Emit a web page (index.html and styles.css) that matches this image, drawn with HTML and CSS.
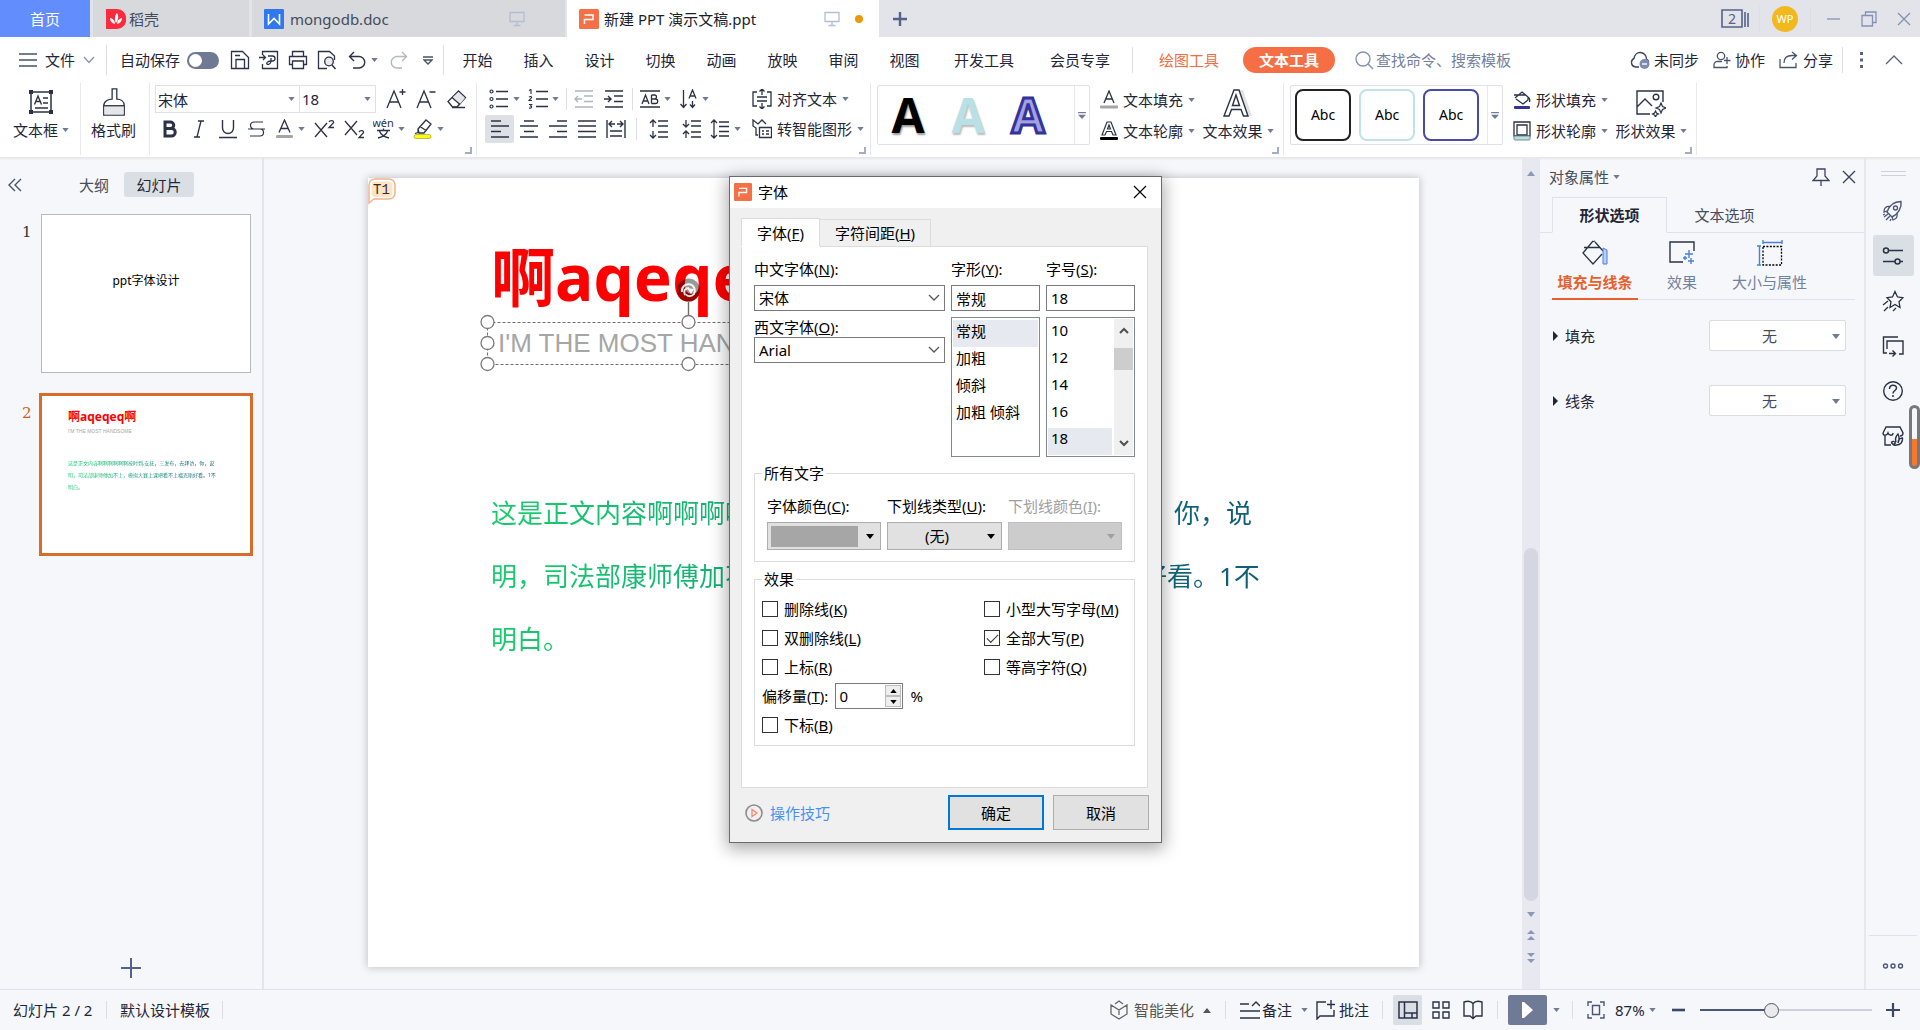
FILE: index.html
```html
<!DOCTYPE html>
<html lang="zh-CN">
<head>
<meta charset="utf-8">
<title>新建 PPT 演示文稿.ppt</title>
<link rel="stylesheet" href="styles.css">
</head>
<body>
<svg class="sprite" aria-hidden="true">
  <symbol id="caret" viewBox="0 0 8 5"><path d="M0 0h8L4 5z" fill="#6f7a99"/></symbol>
  <symbol id="caret-k" viewBox="0 0 8 5"><path d="M0 0h8L4 5z" fill="#000"/></symbol>
  <symbol id="more" viewBox="0 0 9 8"><path d="M0 .7h9" stroke="#6f7a99" stroke-width="1.4"/><path d="M0 3h9L4.500 8z" fill="#6f7a99"/></symbol>
  <symbol id="launch" viewBox="0 0 7 7"><path d="M6 0v6H0" fill="none" stroke="#a4adc4" stroke-width="2"/></symbol>
  <symbol id="screen" viewBox="0 0 16 16"><path d="M1 1.500h14v9H1zM8 10.500V14M4.500 14.500h7" fill="none" stroke="#b3bdd4" stroke-width="1.300"/></symbol>
  <symbol id="chev" viewBox="0 0 12 8"><path d="M1 1l5 5 5-5" fill="none" stroke="#555" stroke-width="1.300"/></symbol>
  <symbol id="plogo" viewBox="0 0 20 20"><rect width="20" height="20" rx="1.500" fill="#f47046"/><path d="M5.500 15v-4.500h8.500V6H5.500" fill="none" stroke="#fff" stroke-width="1.500"/></symbol>
</svg>

<header class="titlebar">
  <button class="tab tab-home">首页</button>
  <button class="tab tab-docer">
    <svg width="20" height="20" viewBox="0 0 20 20"><path d="M0 0h11a9 9 0 0 1 9 10 9 9 0 0 1-9 10H0z" fill="#fb2a3d"/><path d="M10 14c-2-4-1-8 1-10 2 3 1.500 7-1 10zM9 15c-3-.5-5-3-5-6 3 .5 5 3 5 6zM11 15c0-3 2-5.500 5-6 0 3-2 5.500-5 6z" fill="#fff"/></svg>
    <span>稻壳</span>
  </button>
  <button class="tab tab-doc">
    <svg width="20" height="20" viewBox="0 0 20 20"><rect width="20" height="20" rx="1" fill="#3078f0"/><path d="M4.500 5v10L10 9.500l5.500 5.500V5" fill="none" stroke="#fff" stroke-width="1.600"/></svg>
    <span class="tab-name">mongodb.doc</span>
    <svg width="16" height="16"><use href="#screen"/></svg>
  </button>
  <button class="tab tab-active">
    <svg width="20" height="20"><use href="#plogo"/></svg>
    <span class="tab-name">新建 PPT 演示文稿.ppt</span>
    <svg width="16" height="16"><use href="#screen"/></svg>
    <i class="dot"></i>
  </button>
  <button class="newtab" aria-label="新建"><svg width="16" height="16" viewBox="0 0 16 16"><path d="M8 1v14M1 8h14" stroke="#56628a" stroke-width="2.400"/></svg></button>
  <div class="win">
    <svg width="28" height="19" viewBox="0 0 28 19"><path d="M1 1h20v17H1zM24 3v15M27 4v14" fill="none" stroke="#56628a" stroke-width="1.600"/><text x="11" y="15" text-anchor="middle" font-size="14" fill="#56628a">2</text></svg>
    <i class="vsep"></i>
    <span class="avatar">WP</span>
    <i class="vsep"></i>
    <button aria-label="最小化"><svg width="14" height="14" viewBox="0 0 14 14"><path d="M0 7h13" stroke="#8491b3" stroke-width="1.300"/></svg></button>
    <button aria-label="还原"><svg width="16" height="16" viewBox="0 0 16 16"><path d="M1 4.500h10.500v10.500H1zM4.500 4.500V1H15v10.500h-3.500" fill="none" stroke="#8491b3" stroke-width="1.300"/></svg></button>
    <button aria-label="关闭"><svg width="14" height="14" viewBox="0 0 14 14"><path d="M1 1l12 12M13 1L1 13" stroke="#8491b3" stroke-width="1.300"/></svg></button>
  </div>
</header>

<nav class="menubar">
  <div class="filebox">
    <svg width="18" height="14" viewBox="0 0 18 14"><path d="M0 1h18M0 7h18M0 13h18" stroke="#4a5468" stroke-width="1.400"/></svg>
    <button class="file">文件</button>
    <svg width="12" height="8" viewBox="0 0 12 8"><path d="M1 1l5 5.500L11 1" fill="none" stroke="#8a93a8" stroke-width="1.300"/></svg>
  </div>
  <div class="quick">
    <label for="autosave">自动保存</label><input id="autosave" class="toggle" type="checkbox">
    <button aria-label="保存"><svg width="20" height="20" viewBox="0 0 20 20"><path d="M1.500 1.500h11l6 6v11h-17zM6 18.500V9.500h8.500v9M5 5.500h5" fill="none" stroke="#2b3245" stroke-width="1.300"/></svg></button>
    <button aria-label="输出PDF"><svg width="20" height="20" viewBox="0 0 20 20"><path d="M3.500 5V1.500h15v17h-15V14M0 7.500h6M4 5l2.500 2.500L4 10" fill="none" stroke="#2b3245" stroke-width="1.300"/><path d="M9 6h4.500a2.500 2.500 0 0 1 0 5H12v-3M12 11c0 3-3 4-4 3s1-3 4-3" fill="none" stroke="#2b3245" stroke-width="1.300"/></svg></button>
    <button aria-label="打印"><svg width="20" height="20" viewBox="0 0 20 20"><path d="M4.500 6V1.500h11V6M4.500 14.500h-3V6.500h17v8h-3M4.500 11h11v7.500h-11z" fill="none" stroke="#2b3245" stroke-width="1.300"/></svg></button>
    <button aria-label="打印预览"><svg width="20" height="20" viewBox="0 0 20 20"><path d="M10 18.500H1.500v-17h11l5 4.500v4" fill="none" stroke="#2b3245" stroke-width="1.300"/><circle cx="12" cy="11.500" r="4.300" fill="#e9ebef" stroke="#2b3245" stroke-width="1.300"/><path d="M15 15l3.500 4" stroke="#2b3245" stroke-width="1.500"/></svg></button>
    <button class="withcaret" aria-label="撤销"><svg width="18" height="18" viewBox="0 0 18 18"><path d="M6 1L1.500 5.500 6 10M1.500 5.500H11a5.500 5.500 0 0 1 0 11.500H5" fill="none" stroke="#2b3245" stroke-width="1.400"/></svg><svg width="7" height="4"><use href="#caret"/></svg></button>
    <button aria-label="恢复"><svg width="18" height="18" viewBox="0 0 18 18"><path d="M12 1l4.500 4.500L12 10M16.500 5.500H7A5.500 5.500 0 0 0 7 17h5" fill="none" stroke="#b5b8bf" stroke-width="1.400"/></svg></button>
    <button aria-label="更多"><svg width="10" height="9" viewBox="0 0 10 9"><path d="M0 1h10M1 4l4 4 4-4z" fill="none" stroke="#4a5468" stroke-width="1.300"/></svg></button>
  </div>
  <div class="tabs">
    <button>开始</button><button>插入</button><button>设计</button><button>切换</button><button>动画</button><button>放映</button><button>审阅</button><button>视图</button><button class="wide">开发工具</button><button class="wide">会员专享</button>
    <i class="vsep"></i>
    <button class="orange">绘图工具</button><button class="pill">文本工具</button>
  </div>
  <label class="search"><svg width="19" height="19" viewBox="0 0 19 19"><circle cx="8" cy="8" r="7" fill="none" stroke="#8491b3" stroke-width="1.400"/><path d="M13 13l5 5" stroke="#8491b3" stroke-width="1.400"/></svg><input type="text" placeholder="查找命令、搜索模板" aria-label="查找命令"></label>
  <div class="menuright">
    <button><svg width="20" height="18" viewBox="0 0 20 18"><path d="M9 16H5.500A4.500 4.500 0 0 1 4 7.500C4.500 4 7 1.500 10 1.500c4 0 6.500 3 6.500 6.500 1.500.8 2 1.500 2 3" fill="none" stroke="#3a4360" stroke-width="1.400"/><circle cx="14.500" cy="13" r="5" fill="#7f8bb0"/><path d="M12 13h5" stroke="#fff" stroke-width="1.400"/></svg>未同步</button>
    <button><svg width="18" height="18" viewBox="0 0 18 18"><circle cx="8" cy="5" r="3.700" fill="none" stroke="#4a5468" stroke-width="1.300"/><path d="M9 10.500H5a3.500 3.500 0 0 0-4 3.500v2.500h13V15M14 6v7M11 9.500h6.500" fill="none" stroke="#4a5468" stroke-width="1.300"/></svg>协作</button>
    <button><svg width="20" height="18" viewBox="0 0 20 18"><path d="M1 8v8.500h16V12M5 12c0-5 3-7.500 8-7.500h4M13 1l4.500 3.500L13 8.500" fill="none" stroke="#4a5468" stroke-width="1.300"/></svg>分享</button>
    <i class="vsep"></i>
    <button class="sq" aria-label="更多"><svg width="4" height="16" viewBox="0 0 4 16"><path d="M0 0h3v3H0zM0 6.500h3v3H0zM0 13h3v3H0z" fill="#5b6478"/></svg></button>
    <button class="sq" aria-label="折叠功能区"><svg width="18" height="10" viewBox="0 0 18 10"><path d="M1 9l8-8 8 8" fill="none" stroke="#5b6478" stroke-width="1.300"/></svg></button>
  </div>
</nav>

<section class="ribbon">
  <div class="group g-box">
    <button class="big"><svg width="28" height="28" viewBox="0 0 28 28"><path d="M4 4h20v20H4z" fill="none" stroke="#2b3245" stroke-width="1.500"/><path d="M2 2h4v4H2zM22 2h4v4h-4zM2 22h4v4H2zM22 22h4v4h-4z" fill="#2b3245"/><path d="M7.500 16.500L11 8l3.500 8.500M9 13.500h4.500M16 10h5M16 15h5M8 20h13" fill="none" stroke="#2b3245" stroke-width="1.400"/></svg><span>文本框<svg class="c" width="7" height="4"><use href="#caret"/></svg></span></button>
  </div>
  <div class="group g-brush">
    <button class="big"><svg width="26" height="30" viewBox="0 0 26 30"><path d="M11 1h5v11c4 0 8 2 8 7v10H2V19c0-5 5-7 9-7z" fill="#fff" stroke="#2b3245" stroke-width="1.400"/><path d="M2.700 19h20.600v9.300H2.700z" fill="#e4e6ea"/><path d="M2 19h22" stroke="#2b3245" stroke-width="1.400"/></svg><span>格式刷</span></button>
  </div>
  <div class="group g-font">
    <div class="row font1">
      <div class="combo"><input type="text" value="宋体" aria-label="字体"><svg width="7" height="4"><use href="#caret"/></svg></div>
      <div class="combo last"><input type="text" value="18" aria-label="字号"><svg width="7" height="4"><use href="#caret"/></svg></div>
      <button aria-label="增大字号"><svg width="20" height="22" viewBox="0 0 20 22"><path d="M1 20L8 3l7 17M3.500 14h9M16.500 1v6M13.500 4h6" fill="none" stroke="#2b3245" stroke-width="1.300"/></svg></button>
      <button aria-label="减小字号"><svg width="20" height="22" viewBox="0 0 20 22"><path d="M1 20L8 3l7 17M3.500 14h9M13.500 4h6" fill="none" stroke="#2b3245" stroke-width="1.300"/></svg></button>
      <button aria-label="清除格式"><svg width="20" height="20" viewBox="0 0 20 20"><path d="M5.500 18L1 12.500 11.500 2l7 6.500L10 18z" fill="#fff" stroke="#2b3245" stroke-width="1.300"/><path d="M6 8l7 7 5-6-6.500-6z" fill="#e4e6ea"/><path d="M5 8.500l8 7M5 18.500h13" stroke="#2b3245" stroke-width="1.300"/></svg></button>
    </div>
    <div class="row font2">
      <button aria-label="加粗"><svg width="16" height="18" viewBox="0 0 16 18"><path d="M3 2h5.500a3.200 3.200 0 0 1 0 6.500H3zM3 8.500h6.500a3.700 3.700 0 0 1 0 7.500H3z" fill="none" stroke="#2b3245" stroke-width="3"/></svg></button>
      <button aria-label="倾斜"><svg width="12" height="18" viewBox="0 0 12 18"><path d="M5 1h6M1 17h6M8 1L4 17" fill="none" stroke="#2b3245" stroke-width="1.300"/></svg></button>
      <button aria-label="下划线"><svg width="18" height="20" viewBox="0 0 18 20"><path d="M3.500 1v8a5.500 5.500 0 0 0 11 0V1M0 18.500h18" fill="none" stroke="#2b3245" stroke-width="1.400"/></svg></button>
      <button aria-label="删除线"><svg width="18" height="18" viewBox="0 0 18 18"><path d="M15 2H6a3.500 3.500 0 0 0 0 7h6a3.500 3.500 0 0 1 0 7H2M0 9h17" fill="none" stroke="#2b3245" stroke-width="1.200"/></svg></button>
      <button class="withcaret" aria-label="字体颜色"><svg width="18" height="20" viewBox="0 0 18 20"><path d="M3 13.500L8.500 1 14 13.500M5 9.500h7" fill="none" stroke="#2b3245" stroke-width="1.300"/><rect x="0" y="16" width="17" height="3" rx="1" fill="#a6a6a6"/></svg><svg width="7" height="4"><use href="#caret"/></svg></button>
      <button aria-label="上标"><svg width="21" height="20" viewBox="0 0 21 20"><path d="M1 4l12 14M13 4L1 18M15 3c1-2 5-2 4.500.7L15 8.500h5" fill="none" stroke="#2b3245" stroke-width="1.300"/></svg></button>
      <button aria-label="下标"><svg width="21" height="20" viewBox="0 0 21 20"><path d="M1 2l12 14M13 2L1 16M15 13c1-2 5-2 4.500.7L15 18.500h5" fill="none" stroke="#2b3245" stroke-width="1.300"/></svg></button>
      <button class="withcaret" aria-label="拼音指南"><svg width="21" height="20" viewBox="0 0 21 20"><text x="10" y="8" font-size="11" text-anchor="middle" fill="#2b3245">wén</text><path d="M4 11.500h13M10.500 9.500v2M6.500 12c1 3 5 6 9.500 7M14.500 12c-1 3-5 6-9.500 7" fill="none" stroke="#2b3245" stroke-width="1.300"/></svg><svg width="7" height="4"><use href="#caret"/></svg></button>
      <button class="withcaret" aria-label="突出显示"><svg width="20" height="20" viewBox="0 0 20 20"><path d="M5 10l8-9 5 4-7 9H6zM5 10v3.500l-3 1M7 7.500l6 4" fill="none" stroke="#2b3245" stroke-width="1.300"/><rect x="1" y="15.500" width="17" height="4" rx="2" fill="#ff0" stroke="#8b8b3a" stroke-width=".6"/></svg><svg width="7" height="4"><use href="#caret"/></svg></button>
    </div>
    <svg class="launcher" width="7" height="7"><use href="#launch"/></svg>
  </div>
  <div class="group g-para">
    <div class="row para1">
      <button class="withcaret" aria-label="项目符号"><svg width="20" height="20" viewBox="0 0 20 20"><path d="M7 2.500h12M7 10h12M7 17.500h12" stroke="#2b3245" stroke-width="1.500"/><g fill="none" stroke="#2b3245" stroke-width="1.200"><circle cx="2.500" cy="2.500" r="1.500"/><circle cx="2.500" cy="10" r="1.500"/><circle cx="2.500" cy="17.500" r="1.500"/></g></svg><svg width="7" height="4"><use href="#caret"/></svg></button>
      <button class="withcaret" aria-label="编号"><svg width="20" height="20" viewBox="0 0 20 20"><path d="M8 2.500h12M8 10h12M8 17.500h12" stroke="#2b3245" stroke-width="1.500"/><path d="M1 1.500L3 .5V5M1 8c1-1 3-.5 2.500.7L1 11.500h3M1 15.500h2.700L2.500 17c2 0 1.500 2.500-1.500 2" fill="none" stroke="#2b3245" stroke-width="1.100"/></svg><svg width="7" height="4"><use href="#caret"/></svg></button>
      <i class="rsep"></i>
      <button aria-label="减少缩进"><svg width="20" height="18" viewBox="0 0 20 18"><path d="M1 1h18M10 6h9M10 11.500h9M1 17h18M8 9H1M4 6L1 9l3 3" fill="none" stroke="#b2b5bc" stroke-width="1.400"/></svg></button>
      <button aria-label="增加缩进"><svg width="20" height="18" viewBox="0 0 20 18"><path d="M1 1h18M10 6h9M10 11.500h9M1 17h18M0 9h7M4 6l3 3-3 3" fill="none" stroke="#2b3245" stroke-width="1.400"/></svg></button>
      <i class="rsep"></i>
      <button class="withcaret" aria-label="字符缩放"><svg width="20" height="18" viewBox="0 0 20 18"><path d="M0 1h20M0 17h20M2 14l3.500-9L9 14M3.500 11h4M11.500 5v8.500M11.500 5h3a2 2 0 0 1 0 4h-3M11.500 9h4a2.200 2.200 0 0 1 0 4.500h-4" fill="none" stroke="#2b3245" stroke-width="1.300"/></svg><svg width="7" height="4"><use href="#caret"/></svg></button>
      <button class="withcaret" aria-label="文字方向"><svg width="18" height="20" viewBox="0 0 18 20"><path d="M3.500 1v17M.5 15l3 3.500 3-3.500M9 9.500L12.500 1 16 9.500M10 7h5M12.500 12v6M10 15.500l2.500 3 2.500-3" fill="none" stroke="#2b3245" stroke-width="1.300"/></svg><svg width="7" height="4"><use href="#caret"/></svg></button>
      <button class="lab"><svg width="20" height="20" viewBox="0 0 20 20"><path d="M5 3H1v14h4M15 3h4v14h-4M10 0v6M7.500 2.500L10 0l2.500 2.500M10 14v6M7.500 17.500L10 20l2.500-2.500M5 8h10M5 12h10" fill="none" stroke="#2b3245" stroke-width="1.300"/></svg>对齐文本<svg class="c" width="7" height="4"><use href="#caret"/></svg></button>
    </div>
    <div class="row para2">
      <button class="on" aria-label="左对齐"><svg width="18" height="18" viewBox="0 0 18 18"><path d="M0 1h10M0 6h18M0 11.500h10M0 17h18" stroke="#2b3245" stroke-width="1.400"/></svg></button>
      <button aria-label="居中"><svg width="18" height="18" viewBox="0 0 18 18"><path d="M4 1h10M0 6h18M4 11.500h10M0 17h18" stroke="#2b3245" stroke-width="1.400"/></svg></button>
      <button aria-label="右对齐"><svg width="18" height="18" viewBox="0 0 18 18"><path d="M8 1h10M0 6h18M8 11.500h10M0 17h18" stroke="#2b3245" stroke-width="1.400"/></svg></button>
      <button aria-label="两端对齐"><svg width="18" height="18" viewBox="0 0 18 18"><path d="M0 1h18M0 6h18M0 11.500h18M0 17h18" stroke="#2b3245" stroke-width="1.400"/></svg></button>
      <button aria-label="分散对齐"><svg width="20" height="18" viewBox="0 0 20 18"><path d="M1 0v18M19 0v18M3 4h6M11 4h6M6 1L3 4l3 3M14 1l3 3-3 3M4 11h12M4 16h12" fill="none" stroke="#2b3245" stroke-width="1.400"/></svg></button>
      <i class="rsep"></i>
      <button aria-label="增大段距"><svg width="20" height="20" viewBox="0 0 20 20"><path d="M9 2h10M9 7h10M9 13h10M9 18h10M4 8V1M1 4l3-3 3 3M4 12v7M1 16l3 3 3-3" fill="none" stroke="#2b3245" stroke-width="1.300"/></svg></button>
      <button aria-label="减小段距"><svg width="20" height="20" viewBox="0 0 20 20"><path d="M9 2h10M9 7h10M9 13h10M9 18h10M4 1v7M1 5l3 3 3-3M4 19v-7M1 15l3-3 3 3" fill="none" stroke="#2b3245" stroke-width="1.300"/></svg></button>
      <button class="withcaret" aria-label="行距"><svg width="20" height="20" viewBox="0 0 20 20"><path d="M9 3h10M9 7.500h10M9 12.500h10M9 17h10M4 1v18M1 4l3-3 3 3M1 16l3 3 3-3" fill="none" stroke="#2b3245" stroke-width="1.300"/></svg><svg width="7" height="4"><use href="#caret"/></svg></button>
      <button class="lab"><svg width="20" height="20" viewBox="0 0 20 20"><path d="M6 16H4V9L1 7V1l5 4 4-4 4 4" fill="none" stroke="#2b3245" stroke-width="1.300"/><path d="M7.500 8.500h12v10h-12zM10 12h2M14 12h3M10 15h2M14 15h3" fill="none" stroke="#2b3245" stroke-width="1.300"/></svg>转智能图形<svg class="c" width="7" height="4"><use href="#caret"/></svg></button>
    </div>
    <svg class="launcher" width="7" height="7"><use href="#launch"/></svg>
  </div>
  <div class="group g-text">
    <div class="gallery">
      <button class="wa wa-black">A</button><button class="wa wa-mint">A</button><button class="wa wa-blue">A</button>
      <button class="gmore" aria-label="更多样式"><svg width="8" height="7"><use href="#more"/></svg></button>
    </div>
    <div class="stack">
      <button class="lab"><svg width="18" height="20" viewBox="0 0 18 20"><path d="M4 13L9 1l5 12M6 9h6" fill="none" stroke="#2b3245" stroke-width="1.300"/><rect x="0" y="15.500" width="18" height="3" rx="1" fill="#a6a6a6"/></svg>文本填充<svg class="c" width="7" height="4"><use href="#caret"/></svg></button>
      <button class="lab"><svg width="18" height="20" viewBox="0 0 18 20"><path d="M2 14L7 1h4l5 13h-3l-1.500-3.500h-5L5 14zM7.500 8h3L9 4z" fill="none" stroke="#2b3245" stroke-width="1.200"/><rect x="0" y="16" width="18" height="3" rx="1" fill="#000"/></svg>文本轮廓<svg class="c" width="7" height="4"><use href="#caret"/></svg></button>
    </div>
    <button class="big"><svg width="30" height="28" viewBox="0 0 30 28"><path d="M15 1h5l9 26h-6z" fill="#e2e3e7"/><path d="M1 27L11 1h5l9 26h-4.500L18 20.500H8.500L6 27zM9.500 16.500h7L13 6z" fill="#fff" stroke="#2b3245" stroke-width="1.400"/></svg><span>文本效果<svg class="c" width="7" height="4"><use href="#caret"/></svg></span></button>
    <svg class="launcher" width="7" height="7"><use href="#launch"/></svg>
  </div>
  <div class="group g-shape">
    <div class="gallery">
      <button class="abc abc-k">Abc</button><button class="abc abc-m">Abc</button><button class="abc abc-b">Abc</button>
      <button class="gmore" aria-label="更多样式"><svg width="8" height="7"><use href="#more"/></svg></button>
    </div>
    <div class="stack">
      <button class="lab"><svg width="18" height="20" viewBox="0 0 18 20"><path d="M2 8l7-6 6 5v3l-5 4-7-5M1 5h12M15 7c2 1 2 3 1.500 5" fill="none" stroke="#2b3245" stroke-width="1.300"/><rect x="1" y="16" width="16" height="3" rx="1" fill="#33339c"/></svg>形状填充<svg class="c" width="7" height="4"><use href="#caret"/></svg></button>
      <button class="lab"><svg width="18" height="20" viewBox="0 0 18 20"><path d="M1 1h16v14H1zM4 4h10v10H4z" fill="none" stroke="#2b3245" stroke-width="1.300"/><rect x="1" y="15" width="16" height="4" rx="1" fill="#b9dfe2" stroke="#7f8b95"/></svg>形状轮廓<svg class="c" width="7" height="4"><use href="#caret"/></svg></button>
    </div>
    <button class="big"><svg width="30" height="28" viewBox="0 0 30 28"><path d="M14 25H1V2h26v11M1 18l8-8 7 7" fill="none" stroke="#2b3245" stroke-width="1.400"/><circle cx="20" cy="8" r="2.800" fill="none" stroke="#2b3245" stroke-width="1.400"/><path d="M25 14l1.500 3.500L30 19l-3.500 1.500L25 24l-1.500-3.500L20 19l3.500-1.500zM19.500 22l1 2 2 1-2 1-1 2-1-2-2-1 2-1z" fill="#fff" stroke="#2b3245" stroke-width="1.200"/></svg><span>形状效果<svg class="c" width="7" height="4"><use href="#caret"/></svg></span></button>
    <svg class="launcher" width="7" height="7"><use href="#launch"/></svg>
  </div>
</section>

<main class="work">
  <aside class="slides">
    <div class="slides-head">
      <button aria-label="折叠"><svg width="14" height="14" viewBox="0 0 14 14"><path d="M7 1L1 7l6 6M13 1L7 7l6 6" fill="none" stroke="#4a5468" stroke-width="1.400"/></svg></button>
      <button class="outline">大纲</button>
      <button class="current">幻灯片</button>
    </div>
    <div class="thumb"><span class="num">1</span><div class="card first">ppt字体设计</div></div>
    <div class="thumb sel"><span class="num">2</span><div class="card second">
      <p class="t-title">啊aqeqeq啊</p><p class="t-sub">I'M THE MOST HANDSOME</p>
      <p class="t-body">这是正文内容啊啊啊啊啊啊按时到,安抚，三发布，去拜访，你，说<br>明，司法部康师傅加不上，模拟大赛上课吧看不上福克斯好看。1不<br>明白。</p>
    </div></div>
    <button class="addslide" aria-label="新建幻灯片"><svg width="20" height="20" viewBox="0 0 20 20"><path d="M10 0v20M0 10h20" stroke="#56628a" stroke-width="2"/></svg></button>
  </aside>

  <section class="canvas">
    <article class="slide">
      <svg class="mark" width="30" height="27" viewBox="0 0 30 27"><path d="M1 25V7a6 6 0 0 1 6-6h14a6 6 0 0 1 6 6v8a6 6 0 0 1-6 6H6z" fill="#fff" stroke="#f0b48f" stroke-width="1.500"/><rect x="3.500" y="3.500" width="21" height="15.500" rx="4" fill="#fde5c6"/></svg>
      <span class="mark-text">T1</span>
      <h1 class="s-title">啊aqeqeq啊</h1>
      <p class="s-sub">I'M THE MOST HANDSOME</p>
      <svg class="s-frame" width="420" height="106" viewBox="0 0 420 106"><g fill="none" stroke="#6d6d6d"><path d="M10.500 54.500h402v42h-402z" stroke-dasharray="3 2"/><path d="M211.500 34v14" stroke-width="1.400"/></g><g fill="#fff" stroke="#7b7b7b" stroke-width="1.300"><circle cx="10.500" cy="54" r="6.500"/><circle cx="10.500" cy="75" r="6.500"/><circle cx="10.500" cy="96" r="6.500"/><circle cx="211.500" cy="54" r="6.500"/><circle cx="211.500" cy="96" r="6.500"/></g><circle cx="211.500" cy="22" r="11.500" fill="#000" fill-opacity=".4"/><path d="M205 24a6.500 6.500 0 1 1 12 2c-2 2.500-6 3-8 .5M208 27c-2-4 0-7 4-7" fill="none" stroke="#fff" stroke-opacity=".9" stroke-width="2"/><path d="M210 20l7 1-3 5z" fill="#fff" fill-opacity=".9"/></svg>
      <p class="s-body">这是正文内容啊啊啊啊啊啊按时到,安抚，三发布，去拜访，你，说<br>明，司法部康师傅加不上，模拟大赛上课吧看不上福克斯好看。1不<br>明白。</p>
    </article>
  </section>

  <div class="vscroll">
    <svg width="8" height="5" viewBox="0 0 8 5"><path d="M0 5h8L4 0z" fill="#8b97b6"/></svg>
    <i class="track"></i><i class="bar"></i>
    <div class="nav">
      <svg width="8" height="5" viewBox="0 0 8 5"><path d="M0 0h8L4 5z" fill="#8b97b6"/></svg>
      <svg width="8" height="10" viewBox="0 0 8 10"><path d="M0 4h8L4 0zM0 10h8L4 6z" fill="#8b97b6"/></svg>
      <svg width="8" height="10" viewBox="0 0 8 10"><path d="M0 0h8L4 4zM0 6h8l-4 4z" fill="#8b97b6"/></svg>
    </div>
  </div>

  <aside class="props">
    <div class="props-head"><span>对象属性</span><svg width="7" height="4"><use href="#caret"/></svg>
      <button class="pin" aria-label="固定"><svg width="18" height="18" viewBox="0 0 18 18"><path d="M5 1h8v7l4 4.500H1L5 8zM9 12.500V18" fill="none" stroke="#3a4360" stroke-width="1.300"/></svg></button>
      <button aria-label="关闭"><svg width="14" height="14" viewBox="0 0 14 14"><path d="M1 1l12 12M13 1L1 13" stroke="#3a4360" stroke-width="1.400"/></svg></button></div>
    <div class="props-tabs"><button class="act">形状选项</button><button>文本选项</button></div>
    <div class="props-sub">
      <button class="act"><svg width="26" height="26" viewBox="0 0 26 26"><path d="M13 2l8 9M11 1L1 13l10 11 9-10M2 7.500h16M10 2l3-1" fill="none" stroke="#2b3245" stroke-width="1.300"/><path d="M21 8l4 2v14h-4z" fill="#b9cdf5" stroke="#4a7fe0"/></svg><span>填充与线条</span></button>
      <button><svg width="26" height="26" viewBox="0 0 26 26"><path d="M14 22H1V2h24v9" fill="none" stroke="#2b3245" stroke-width="1.400"/><path d="M20 10v8M16 14h8M22 18v6M19 21h6M16 16v4M14 18h4" stroke="#4a7fe0" stroke-width="1.400"/></svg><span>效果</span></button>
      <button><svg width="26" height="26" viewBox="0 0 26 26"><path d="M6 6.500h18.500v18.500H6z" fill="none" stroke="#000" stroke-width="1.300" stroke-dasharray="2 1.400"/><path d="M6 2.500h19M6 0v4M25 0v4M2.500 6v19M0 6h4M0 25h4" stroke="#4a7fe0" stroke-width="1.400"/></svg><span>大小与属性</span></button>
    </div>
    <div class="prow"><i class="tri"></i><label for="fill">填充</label><div class="psel"><select id="fill"><option>无</option></select><svg width="8" height="5"><use href="#caret"/></svg></div></div>
    <div class="prow"><i class="tri"></i><label for="line">线条</label><div class="psel"><select id="line"><option>无</option></select><svg width="8" height="5"><use href="#caret"/></svg></div></div>
  </aside>

  <aside class="rail">
    <i class="grip"></i>
    <button aria-label="快捷"><svg width="22" height="22" viewBox="0 0 22 22"><path d="M5 12c2-6 7-10.500 14-10.500C20 8 16 14 10 17z" fill="none" stroke="#4a5578" stroke-width="1.400"/><circle cx="13.500" cy="8" r="2" fill="none" stroke="#4a5578" stroke-width="1.300"/><path d="M8 6.500C4 6 2 8 2 12l3-1M15 13c1 4-1 6-4 7l-1-3M6 14l-4 3M8 16l-4 4M3 14l-2 1M9 19l-1 2" fill="none" stroke="#4a5578" stroke-width="1.300"/></svg></button>
    <button class="on" aria-label="属性"><svg width="22" height="22" viewBox="0 0 22 22"><path d="M6.500 5.500H21M1 16.500h12M18 16.500h3" stroke="#2b3245" stroke-width="1.500"/><circle cx="4" cy="5.500" r="2.500" fill="none" stroke="#2b3245" stroke-width="1.500"/><circle cx="15.500" cy="16.500" r="2.500" fill="none" stroke="#2b3245" stroke-width="1.500"/></svg></button>
    <button aria-label="动画"><svg width="22" height="22" viewBox="0 0 22 22"><path d="M13 1.500l2.500 5.500 5.500.7-4 4 1 5.800-5-3-5 3 1-5.800-4-4 5.500-.7zM6 11l-5 4M6 17l-4 4M14 18l-3 3" fill="none" stroke="#2b3245" stroke-width="1.300"/></svg></button>
    <button aria-label="切换"><svg width="22" height="22" viewBox="0 0 22 22"><path d="M5 18H1.500V2H16M5 14V6h16v13h-4M5 14M7 18.500h6M10.500 15.500l3 3-3 3" fill="none" stroke="#2b3245" stroke-width="1.400"/></svg></button>
    <button aria-label="帮助"><svg width="22" height="22" viewBox="0 0 22 22"><circle cx="11" cy="11" r="9.300" fill="none" stroke="#2b3245" stroke-width="1.400"/><path d="M7.500 9c0-5 7-4.500 7-1 0 2.500-3.500 2.500-3.500 5.500M11 15v2" fill="none" stroke="#2b3245" stroke-width="1.500"/></svg></button>
    <button aria-label="素材"><svg width="22" height="22" viewBox="0 0 22 22"><path d="M3 10.500V20h6M1 8l3-6h14l3 6c0 3-2 3-3 3M1 8c0 3 4 3 5 0 1 3 5 3 5 0M9.500 17c1.500-1 3-1 4 1-2 2-4 1-4-1zM14 17c-1-3 0-6 2-8 1.500 3 1.500 6 0 9M16 18c0-3 2-5 4.500-5 .5 4-2 7-6 7-2 .5-4 0-5-3" fill="none" stroke="#2b3245" stroke-width="1.400"/></svg></button>
    <i class="float"></i>
    <button class="railmore" aria-label="更多"><svg width="22" height="8" viewBox="0 0 22 8"><g fill="none" stroke="#4a5578" stroke-width="1.400"><circle cx="3.500" cy="4" r="2"/><circle cx="11" cy="4" r="2"/><circle cx="18.500" cy="4" r="2"/></g></svg></button>
  </aside>
</main>

<footer class="status">
  <span class="pages">幻灯片 2 / 2</span><i class="vsep"></i><span class="tpl">默认设计模板</span><i class="vsep"></i>
  <div class="tools">
    <button class="beauty"><svg width="18" height="20" viewBox="0 0 18 20"><path d="M1 5v9l8 5 8-5V5l-8 5zM5 4l4-3 4 3M9 10v5" fill="none" stroke="#666" stroke-width="1.300"/></svg>智能美化<svg class="up" width="8" height="5" viewBox="0 0 8 5"><path d="M0 5h8L4 0z" fill="#555"/></svg></button>
    <i class="vsep"></i>
    <button class="note"><svg width="20" height="18" viewBox="0 0 20 18"><path d="M0 3h9M0 10h20M0 17h20M12 5l4-4 4 4" fill="none" stroke="#2b3245" stroke-width="1.400"/></svg>备注<svg class="c" width="7" height="4"><use href="#caret"/></svg></button>
    <button class="comment"><svg width="20" height="20" viewBox="0 0 20 20"><path d="M10 2H1v17l3-3h14v-6M15 0v9M11 4.500h8" fill="none" stroke="#2b3245" stroke-width="1.400"/></svg>批注</button>
    <i class="vsep"></i>
    <button class="view on" aria-label="普通视图"><svg width="20" height="18" viewBox="0 0 20 18"><path d="M1 1h18v16H1zM6.500 1v16M6.500 12H19M14 12v5" fill="none" stroke="#2b3245" stroke-width="1.500"/></svg></button>
    <button class="view" aria-label="浏览视图"><svg width="18" height="18" viewBox="0 0 18 18"><path d="M1 1h6v6H1zM11 1h6v6h-6zM1 11h6v6H1zM11 11h6v6h-6z" fill="none" stroke="#2b3245" stroke-width="1.400"/></svg></button>
    <button class="view" aria-label="阅读视图"><svg width="20" height="20" viewBox="0 0 20 20"><path d="M10 3.500C8 1 4 1 1 2v14h6l3 2.500 3-2.500h6V2c-3-1-7-1-9 1.500zM10 3.500V18" fill="none" stroke="#2b3245" stroke-width="1.400"/></svg></button>
    <i class="vsep"></i>
    <button class="play" aria-label="放映"><svg width="11" height="16" viewBox="0 0 11 16"><path d="M0 0h2l9 8-9 8H0z" fill="#fff"/></svg></button><svg width="7" height="4"><use href="#caret"/></svg>
    <i class="vsep"></i>
    <button class="fit" aria-label="适应窗口"><svg width="18" height="18" viewBox="0 0 18 18"><path d="M5 1H1v4M13 1h4v4M1 13v4h4M17 13v4h-4M5.500 4.500h7v9h-7z" fill="none" stroke="#4a5578" stroke-width="1.400"/></svg></button>
    <button class="pct">87%<svg class="c" width="7" height="4"><use href="#caret"/></svg></button>
    <button class="zb" aria-label="缩小"><svg width="14" height="14" viewBox="0 0 14 14"><path d="M0 7h13" stroke="#3a4766" stroke-width="2.600"/></svg></button>
    <input class="zoom" type="range" min="0" max="100" value="41" aria-label="缩放">
    <button class="zb" aria-label="放大"><svg width="14" height="14" viewBox="0 0 14 14"><path d="M0 7h14M7 0v14" stroke="#3a4766" stroke-width="2.200"/></svg></button>
  </div>
</footer>

<section class="dialog" role="dialog" aria-label="字体">
  <div class="dtitle"><svg width="18" height="18"><use href="#plogo"/></svg><span>字体</span><button aria-label="关闭"><svg width="14" height="14" viewBox="0 0 14 14"><path d="M1 1l12 12M13 1L1 13" stroke="#000" stroke-width="1.200"/></svg></button></div>
  <div class="dtabs"><button class="act">字体(<u>F</u>)</button><button>字符间距(<u>H</u>)</button></div>
  <div class="dpanel">
    <div class="dfonts">
      <div class="dcol">
        <label for="cn">中文字体(<u>N</u>):</label>
        <div class="dcombo"><select id="cn"><option>宋体</option></select><svg width="12" height="8"><use href="#chev"/></svg></div>
        <label class="tight" for="en">西文字体(<u>O</u>):</label>
        <div class="dcombo"><select id="en"><option>Arial</option></select><svg width="12" height="8"><use href="#chev"/></svg></div>
      </div>
      <div class="dcol">
        <label for="sty">字形(<u>Y</u>):</label>
        <input class="dtext" id="sty" type="text" value="常规">
        <div class="dlist"><select size="5" aria-label="字形列表"><option selected>常规</option><option>加粗</option><option>倾斜</option><option>加粗 倾斜</option></select></div>
      </div>
      <div class="dcol">
        <label for="siz">字号(<u>S</u>):</label>
        <input class="dtext" id="siz" type="text" value="18">
        <div class="dlist"><select size="5" aria-label="字号列表"><option>10</option><option>12</option><option>14</option><option>16</option><option selected>18</option></select>
          <div class="sb"><svg width="10" height="7" viewBox="0 0 10 7"><path d="M1 6l4-4 4 4" fill="none" stroke="#505050" stroke-width="2"/></svg><i></i><svg width="10" height="7" viewBox="0 0 10 7"><path d="M1 1l4 4 4-4" fill="none" stroke="#505050" stroke-width="2"/></svg></div></div>
      </div>
    </div>
    <fieldset class="alltext"><legend>所有文字</legend>
      <div class="c3">
        <span>字体颜色(<u>C</u>):</span><span>下划线类型(<u>U</u>):</span><span class="dim">下划线颜色(<u>I</u>):</span>
        <button class="drop" aria-label="字体颜色"><i class="swatch"></i><svg width="8" height="5"><use href="#caret-k"/></svg></button>
        <button class="drop"><span>(无)</span><svg width="8" height="5"><use href="#caret-k"/></svg></button>
        <button class="drop off" disabled aria-label="下划线颜色"><span></span><svg width="8" height="5" viewBox="0 0 8 5"><path d="M0 0h8L4 5z" fill="#a0a0a0"/></svg></button>
      </div>
    </fieldset>
    <fieldset class="effects"><legend>效果</legend>
      <div class="fx">
        <label><input type="checkbox"><span>删除线(<u>K</u>)</span></label><label><input type="checkbox"><span>小型大写字母(<u>M</u>)</span></label>
        <label><input type="checkbox"><span>双删除线(<u>L</u>)</span></label><label><input type="checkbox" checked><span>全部大写(<u>P</u>)</span></label>
        <label><input type="checkbox"><span>上标(<u>R</u>)</span></label><label><input type="checkbox"><span>等高字符(<u>Q</u>)</span></label>
      </div>
      <div class="offset"><label for="off">偏移量(<u>T</u>):</label><div class="spin"><input id="off" type="text" value="0"><div class="updn"><button aria-label="增加"><svg width="7" height="4" viewBox="0 0 8 5"><path d="M0 5h8L4 0z"/></svg></button><button aria-label="减少"><svg width="7" height="4"><use href="#caret-k"/></svg></button></div></div><span>%</span></div>
      <div class="fx"><label><input type="checkbox"><span>下标(<u>B</u>)</span></label></div>
    </fieldset>
  </div>
  <div class="dfoot">
    <svg width="18" height="18" viewBox="0 0 18 18"><circle cx="9" cy="9" r="8" fill="none" stroke="#8e8e8e" stroke-width="1.600"/><path d="M7 5.500l5 3.500-5 3.500z" fill="none" stroke="#f28a6c" stroke-width="1.300"/></svg>
    <a href="#">操作技巧</a>
    <button class="ok">确定</button><button>取消</button>
  </div>
</section>
</body>
</html>
```
FILE: styles.css
```css
* { box-sizing: border-box; }
body {
  margin: 0; min-height: 100vh; display: flex; flex-direction: column; position: relative;
  background: #f5f7fa; color: #1f2637;
  font: 15px/20px "Noto Sans", "Noto Sans CJK SC", sans-serif;
}
button, input, select { font: inherit; color: inherit; margin: 0; padding: 0; border: 0; background: none; border-radius: 0; }
select, input { appearance: none; outline: 0; }
p, h1 { margin: 0; }
svg { display: block; flex: none; }
.sprite { position: absolute; width: 0; height: 0; }
.vsep { flex: none; width: 1px; height: 26px; background: #dcdee3; }

/* window tabs */
.titlebar { display: flex; height: 37px; background: #e2e4e9; }
.tab { display: flex; align-items: center; text-align: left; background: #d7d9dd; color: #454c5c; margin-right: 3px; height: 37px; }
.tab-home { width: 90px; justify-content: center; background: #618efc; color: #fff; }
.tab-docer { width: 156px; padding-left: 13px; gap: 3px; }
.tab-doc { width: 313px; padding: 0 40px 0 12px; gap: 6px; margin-right: 2px; }
.tab-active { width: 312px; padding: 0 16px 0 12px; gap: 5px; background: #fff; color: #1a1f2b; margin: 0; }
.tab-name { flex: 1; white-space: nowrap; }
.dot { width: 8px; height: 8px; border-radius: 50%; background: #e89a0c; margin-left: 10px; }
.newtab { width: 42px; display: flex; align-items: center; justify-content: center; }
.win { margin-left: auto; display: flex; align-items: center; gap: 10px; padding-right: 4px; }
.avatar { width: 26px; height: 26px; margin: 0 2px; border-radius: 50%; background: #f2b91f; color: #fff; font-size: 11px; line-height: 26px; text-align: center; }
.win button { width: 25px; display: flex; justify-content: center; }

/* menu bar */
.menubar { display: flex; align-items: center; height: 46px; background: #fff; }
.filebox { width: 107px; height: 30px; padding-left: 19px; display: flex; align-items: center; gap: 8px; border-right: 1px solid #dcdee3; }
.quick { width: 337px; height: 30px; padding-left: 13px; display: flex; align-items: center; border-right: 1px solid #dcdee3; }
.quick button { width: 29px; height: 28px; display: flex; align-items: center; justify-content: center; }
.quick button.withcaret { width: 43px; gap: 5px; }
.toggle { width: 32px; height: 17px; margin: 0 6px 0 7px; border-radius: 9px; background: #6f7994; display: flex; align-items: center; padding: 0 2px; }
.toggle::before { content: ""; width: 13px; height: 13px; border-radius: 50%; background: #fff; }
.tabs { display: flex; align-items: center; padding-left: 3px; white-space: nowrap; }
.tabs button { width: 61px; height: 26px; }
.tabs .wide { width: 94px; }
.tabs button + .wide { margin-left: 2px; }
.tabs .vsep { margin: 0 10px 0 5px; }
.tabs .orange { width: 92px; color: #f46c43; }
.tabs .pill { width: 92px; margin-left: 8px; border-radius: 13px; background: #f66e44; color: #fff; font-weight: 700; }
.search { display: flex; align-items: center; gap: 2px; margin-left: 20px; flex: 1; min-width: 0; }
.search input { flex: 1; min-width: 0; }
.search input::placeholder { color: #74809f; opacity: 1; }
.menuright { display: flex; align-items: center; gap: 14px; padding-right: 17px; white-space: nowrap; }
.menuright button { display: flex; align-items: center; gap: 4px; }
.menuright .vsep { margin: 0 -4px 0 -5px; }
.menuright .sq { width: 18px; justify-content: center; }

/* ribbon */
.ribbon { display: flex; height: 75px; background: #fff; border-bottom: 1px solid #e6e7ea; box-shadow: 0 1px 2px #0001; }
.group { position: relative; height: 72px; border-right: 1px solid #e8e9ed; padding-top: 1px; white-space: nowrap; }
.ribbon button { display: flex; align-items: center; justify-content: center; }
.ribbon .big { flex-direction: column; gap: 2px; padding-top: 4px; }
.big > svg { height: 28px; }
.big span { display: flex; align-items: center; line-height: 24px; }
.c { margin-left: 4px; }
.launcher { position: absolute; right: 4px; bottom: 1px; }
.g-box { width: 81px; padding-left: 13px; }
.g-brush { width: 69px; padding-left: 10px; }
.g-font { width: 327px; padding-left: 5px; }
.g-para { width: 394px; padding-left: 8px; }
.g-text, .g-shape { width: 413px; padding-left: 6px; display: flex; }
.row { display: grid; height: 30px; align-items: center; }
.row button { height: 28px; }
.row .withcaret { gap: 4px; }
.font1 { grid-template-columns: 145px 76px 5px 30px 30px 31px; }
.font1 button:nth-of-type(1) { grid-column: 4; }
.font2 { grid-template-columns: repeat(4, 29px) 38px 30px 30px 40px 38px; }
.para1 { grid-template-columns: 38px 40px 6px 30px 30px 6px 40px 38px 39px auto; }
.para1 .lab { grid-column: 10; }
.para2 { grid-template-columns: repeat(5, 29px) 12px 33px 33px 35px 9px auto; }
.para2 .lab { grid-column: 11; }
.ribbon .lab { gap: 5px; justify-content: flex-start; }
.lab .c { margin-left: 0; }
.para2 .on { height: 28px; background: #dde1e6; border-radius: 2px; }
.rsep { width: 1px; height: 22px; background: #dcdee3; justify-self: center; }
.combo { display: flex; align-items: center; height: 28px; border: 1px solid #dfe1e6; position: relative; }
.combo.last { border-left: 0; }
.combo input { width: 100%; height: 26px; padding: 0 14px 0 2px; }
.combo svg { position: absolute; right: 4px; }
.gallery { width: 213px; height: 60px; margin-top: 1px; border: 1px solid #dfe1e6; border-radius: 2px; display: flex; align-items: center; padding-left: 4px; gap: 8px; }
.gallery .gmore { width: 15px; height: 58px; border-left: 1px solid #e6e8ec; margin-left: auto; }
.gallery .wa { width: 52px; height: 58px; font: 700 48px/56px "Open Sans", sans-serif; }
.wa-black { color: #000; text-shadow: 1px 2px 2px #999; }
.wa-mint { color: #b9e0e4; text-shadow: 1px 2px 2px #bbb; }
.wa-blue { color: #a3a1e2; -webkit-text-stroke: 3px #33339c; }
.gallery .abc { width: 57px; height: 52px; border: 2px solid #222; border-radius: 8px; color: #000; font-size: 14px; background: #fff; }
.gallery .abc-m { border-color: #bfe3e6; }
.gallery .abc-b { border-color: #4a4aa8; }
.stack { display: flex; flex-direction: column; padding-left: 10px; width: 112px; }
.stack .lab { height: 31px; }
.g-text .big, .g-shape .big { width: 72px; height: 60px; }

/* work area */
.work { flex: 1; display: flex; min-height: 0; }
.slides { width: 264px; border-right: 2px solid #e3e5ec; display: flex; flex-direction: column; }
.slides-head { display: flex; align-items: center; padding: 14px 0 0 8px; height: 39px; }
.slides-head .outline { margin-left: 57px; width: 30px; color: #454c5c; }
.slides-head .current { margin-left: 15px; width: 70px; height: 25px; border-radius: 3px; background: #dadfe6; }
.thumb { display: flex; margin-top: 17px; padding-left: 22px; }
.num { width: 19px; padding-top: 8px; font: 15px/20px "DejaVu Serif", serif; color: #333; }
.card { width: 210px; height: 159px; background: #fff; border: 1px solid #b8b9bc; }
.first { color: #000; font-size: 12px; text-align: center; line-height: 132px; }
.sel .num { color: #d0601f; width: 17px; padding-top: 10px; }
.sel .card { width: 214px; height: 163px; border: 3px solid #d76d2b; padding: 11px 0 0 26px; }
.slides .sel { margin-top: 20px; }
.t-title { font-size: 12px; line-height: 20px; font-weight: 700; color: #f00; }
.t-sub { font: 5px/8px "Liberation Sans", sans-serif; color: #a6a6a6; }
.t-body { margin-top: 22px; font-size: 5px; line-height: 12px; white-space: nowrap; width: 152px; }
.t-body, .s-body { background: linear-gradient(100deg, #16cb6c 5%, #14b674 25%, #105f78 90%); -webkit-background-clip: text; background-clip: text; color: transparent; }
.addslide { margin: auto auto 11px 121px; }

.canvas { flex: 1; display: flex; padding: 20px 103px 22px 104px; }
.slide { flex: 1; position: relative; background: #fff; box-shadow: 0 0 8px 1px #0003; }
.mark { position: absolute; left: 0; top: 0; }
.mark-text { position: absolute; left: 5px; top: 3px; font: 14px/18px "Liberation Mono", monospace; color: #3b2a1a; }
.s-title { position: absolute; left: 123px; top: 54px; font: 700 64px/90px "Noto Sans", "Noto Sans CJK SC", sans-serif; color: #f00; white-space: nowrap; }
.s-sub { position: absolute; left: 130px; top: 149px; font: 26px/32px "Liberation Sans", sans-serif; color: #a6a6a6; white-space: nowrap; }
.s-frame { position: absolute; left: 109px; top: 90px; }
.s-body { position: absolute; left: 123px; top: 304px; width: 780px; font-size: 26px; line-height: 63px; white-space: nowrap; }

.vscroll { width: 18px; background: #e8e9f0; display: flex; flex-direction: column; align-items: center; padding-top: 13px; }
.track { flex: 371; }
.bar { flex: 353; width: 14px; border-radius: 7px; background: #d4d7e1; }
.nav { display: flex; flex-direction: column; gap: 13px; padding: 11px 0 26px; }

.props { width: 326px; border-right: 2px solid #e6e8ed; }
.props-head { display: flex; align-items: center; gap: 4px; height: 39px; padding: 0 8px 2px 9px; color: #454c5c; }
.props-head button { width: 14px; }
.props-head .pin { width: 18px; margin: 0 8px 0 auto; }
.props-tabs { display: flex; padding-left: 12px; border-bottom: 1px solid #e0e2e9; height: 36px; }
.props-tabs button { width: 115px; height: 36px; border: 1px solid transparent; color: #454c5c; }
.props-tabs .act { border-color: #e0e2e9; border-bottom-color: #f5f7fa; background: #f5f7fa; font-weight: 700; color: #1f2637; }
.props-sub { display: grid; grid-template-columns: 86px 88px 87px; margin: 0 9px 0 10px; padding-left: 2px; height: 67px; border-bottom: 1px solid #e0e2e9; }
.props-sub button { display: flex; flex-direction: column; align-items: center; gap: 6px; padding-top: 7px; color: #74809f; white-space: nowrap; height: 67px; }
.props-sub .act { color: #e9602f; font-weight: 700; border-bottom: 2px solid #e9602f; }
.prow { display: flex; align-items: center; height: 31px; margin: 20px 18px 34px 13px; }
.prow label { margin-left: 7px; }
.tri { border: 5px solid transparent; border-left-color: #1f2637; border-right: 0; }
.psel { position: relative; width: 137px; margin-left: auto; }
.psel select { width: 100%; height: 31px; border: 1px solid #d9dce4; border-radius: 2px; background: #fff; text-align: center; text-align-last: center; padding-right: 16px; color: #454c5c; }
.psel svg { position: absolute; right: 6px; top: 14px; }

.rail { width: 54px; position: relative; display: flex; flex-direction: column; align-items: center; padding-top: 13px; gap: 4px; }
.grip { width: 25px; height: 5px; border: solid #cfd2d8; border-width: 1px 0; margin-bottom: 10px; }
.rail button { width: 41px; height: 41px; display: flex; align-items: center; justify-content: center; }
.rail .on { background: #dadfe6; border-radius: 3px; }
.rail .railmore { margin-top: auto; width: 48px; height: 54px; border-top: 1px solid #dfe2e8; padding-top: 6px; }
.float { position: absolute; right: 0; top: 247px; width: 11px; height: 64px; border: 3px solid #76787c; border-radius: 6px; background: linear-gradient(#f5f7fa 31px, #f9762a 31px); }

/* status bar */
.status { display: flex; align-items: center; height: 41px; border-top: 1px solid #dfe2ea; white-space: nowrap; }
.status .vsep { height: 18px; }
.pages { width: 106px; padding-left: 13px; }
.tpl { width: 115px; padding-left: 13px; }
.tools { margin-left: auto; display: flex; align-items: center; padding-right: 20px; }
.tools button { display: flex; align-items: center; height: 30px; }
.tools .beauty { gap: 6px; color: #555; width: 115px; }
.beauty .up { margin-left: 3px; }
.tools .note { width: 76px; margin-left: 14px; gap: 2px; }
.tools .note .c { margin-left: 7px; }
.tools .comment { gap: 3px; width: 66px; }
.tools .view { width: 29px; justify-content: center; margin-right: 3px; }
.tools .view.on { background: #dadfe6; border-radius: 2px; margin: 0 4px 0 10px; }
.tools .view + .vsep { margin-left: 7px; }
.tools .play { width: 39px; justify-content: center; background: #6f7a96; border-radius: 2px; margin: 0 6px 0 10px; }
.play ~ .vsep { margin-left: 12px; }
.tools .fit { margin: 0 10px 0 14px; }
.tools .pct { width: 57px; }
.tools .zb { width: 14px; }
.zoom { width: 172px; height: 18px; margin: 0 14px; background: linear-gradient(90deg, #4a5878 42%, #ccd0da 42%) center / 100% 2px no-repeat; }
.zoom::-webkit-slider-thumb { appearance: none; width: 15px; height: 15px; border-radius: 50%; background: #e9eaec; border: 1px solid #555; }

/* font dialog */
.dialog { position: absolute; left: 729px; top: 176px; width: 433px; background: #f0f0f0; color: #000; border: 1px solid #6b6b6b; box-shadow: 0 4px 16px 2px #0005; padding-bottom: 12px; }
.dtitle { display: flex; align-items: center; height: 31px; background: #fff; padding: 0 14px 1px 4px; gap: 6px; }
.dtitle button { margin-left: auto; }
.dtabs { display: flex; align-items: flex-end; height: 38px; padding-left: 11px; }
.dtabs button { height: 27px; width: 111px; border: 1px solid #dcdcdc; border-left: 0; border-bottom: 0; }
.dtabs .act { width: 79px; height: 28px; border-left: 1px solid #dcdcdc; background: #fff; box-shadow: 0 1px #fff; position: relative; }
.dpanel { margin: 0 13px 0 11px; height: 542px; background: #fff; border: 1px solid #dcdcdc; padding: 12px 12px 0; }
.dfonts { display: grid; grid-template-columns: 191px 89px 89px; gap: 6px; }
.dcol { display: flex; flex-direction: column; }
.dcol label { height: 26px; line-height: 20px; }
.dcol .tight { margin-top: 6px; height: 20px; }
.dcombo { position: relative; }
.dcombo select, .dtext { width: 100%; height: 26px; border: 1px solid #7a7a7a; background: #fff; padding: 0 4px; }
.dcombo svg { position: absolute; right: 5px; top: 9px; }
.dlist { display: flex; height: 140px; margin-top: 6px; border: 1px solid #828790; padding: 1px; }
.dlist select { flex: 1; min-width: 0; height: 136px; overflow: hidden; padding: 1px 0 0; }
.dlist option { height: 27px; min-height: 27px; padding: 0 3px; line-height: 27px; color: #000; }
.dlist option:checked { background: #e6e9ef linear-gradient(#e6e9ef, #e6e9ef); color: #000; }
.sb { width: 19px; margin-left: 2px; background: #f0f0f0; display: flex; flex-direction: column; align-items: center; justify-content: space-between; padding: 8px 0; }
.sb i { width: 19px; height: 22px; background: #cdcdcd; margin-bottom: 57px; }
fieldset { margin: 0; padding: 0; border: 1px solid #dcdcdc; min-width: 0; }
legend { margin-left: 7px; padding: 0 2px; line-height: 20px; }
.alltext { margin-top: 6px; height: 99px; }
.c3 { display: grid; grid-template-columns: 114px 115px 114px; gap: 6px; padding: 13px 0 0 12px; white-space: nowrap; }
.dim { color: #a0a0a0; }
.drop { height: 28px; border: 1px solid #adadad; background: #e1e1e1; display: flex; align-items: center; justify-content: space-between; padding: 0 6px 0 3px; }
.drop span { flex: 1; text-align: center; padding-right: 4px; }
.drop.off { background: #ccc; border-color: #bfbfbf; }
.swatch { width: 87px; height: 21px; background: #a6a6a6; }
.effects { margin-top: 7px; height: 177px; }
.fx { display: grid; grid-template-columns: 222px 1fr; row-gap: 9px; padding: 10px 0 0 7px; white-space: nowrap; }
.fx label { display: flex; align-items: center; gap: 6px; }
.fx input { width: 16px; height: 16px; border: 1px solid #333; background: #fff; display: flex; align-items: center; justify-content: center; }
.fx input:checked::before { content: ""; width: 10px; height: 5px; border: solid #333; border-width: 0 0 1px 1px; transform: rotate(-45deg); margin-bottom: 3px; }
.offset { display: flex; align-items: center; gap: 7px; margin: 6px 0 0 7px; height: 26px; }
.offset + .fx { padding-top: 6px; }
.spin { width: 68px; height: 26px; border: 1px solid #7a7a7a; display: flex; padding: 1px; }
.spin input { width: 48px; padding-left: 2px; }
.updn { display: flex; flex-direction: column; width: 16px; }
.updn button { height: 11px; border: 1px solid #bdbdbd; background: #eee; display: flex; align-items: center; justify-content: center; }
.dfoot { display: flex; align-items: center; padding: 7px 12px 0 15px; gap: 7px; }
.dfoot a { color: #4a90f5; text-decoration: none; margin-right: auto; }
.dfoot button { width: 96px; height: 35px; background: #e1e1e1; border: 1px solid #adadad; margin-left: 2px; }
.dfoot .ok { border: 2px solid #0078d7; }
```
